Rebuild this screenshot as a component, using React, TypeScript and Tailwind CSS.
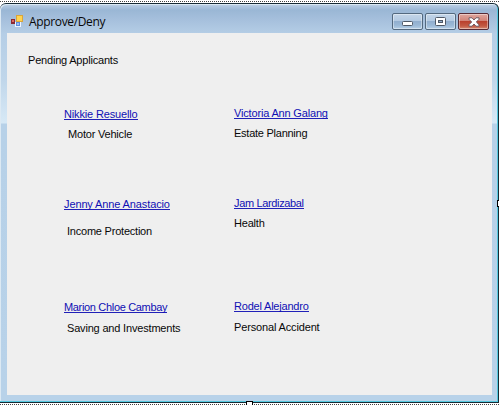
import type { ReactNode } from 'react';

const dots = 'h-px bg-[repeating-linear-gradient(90deg,#444_0px,#444_1px,#fff_1px,#fff_2px)]';

function Applicant({ name, plan, nameClass, planClass }: { name: string; plan: string; nameClass: string; planClass: string }) {
  return (
    <div className="flex flex-col items-start">
      <a href="#" className={`block h-[13px] border-b border-[#2020b8] leading-[14px] whitespace-nowrap text-[#1010b4] ${nameClass}`}>{name}</a>
      <span className={`block leading-[14px] whitespace-nowrap ${planClass}`}>{plan}</span>
    </div>
  );
}

function CaptionButton({ label, close = false, children }: { label: string; close?: boolean; children: ReactNode }) {
  const tone = close
    ? 'border-[#562b35] bg-[linear-gradient(#dfa79f_0%,#d18377_46%,#b9412e_50%,#c35a43_80%,#d58c75_100%)]'
    : 'border-[#53697f] bg-[linear-gradient(#c3d5e8_0%,#b3cae2_46%,#92afcf_50%,#9ab8d6_75%,#b7d0e7_100%)]';
  return (
    <button aria-label={label} className={`flex h-[17px] w-[31px] items-center justify-center rounded-[2px] border shadow-[inset_0_0_0_1px_rgba(255,255,255,0.4)] ${tone}`}>
      {children}
    </button>
  );
}

export default function App() {
  return (
    <div className="relative flex h-[405px] w-[499px] flex-col overflow-hidden bg-white pt-px font-['Liberation_Sans',Arial,sans-serif] text-[11px] text-[#080808]">
      <div className={dots} />
      <div className="mt-px flex h-[400px] w-[499px] flex-col rounded-t-[6px] border-t border-r border-b border-[#172b35] bg-[linear-gradient(#bed2e7_0px,#9ab7d5_6px,#a5bfdc_15px,#b5cee6_30px,#c0d6ea_75px,#d7e9f6_119px,#b7d1e8_120px,#b8d2e9_100%)] pr-[6px] pl-[7px] shadow-[inset_-1px_-1px_0_#55c9df,inset_1px_1px_0_#dce9f3]">
        <header className="flex h-[29px] shrink-0 items-start">
          <svg width="12" height="12" viewBox="0 0 12 12" className="mt-[11px] ml-[4px]" shapeRendering="crispEdges">
            <rect x="0" y="4" width="4" height="5" fill="#8b2932" />
            <rect x="1" y="5" width="2" height="2" fill="#dc6961" />
            <rect x="5" y="0" width="7" height="7" fill="#d9a53b" />
            <rect x="6" y="1" width="5" height="5" fill="#ffd452" />
            <rect x="4" y="7" width="6" height="5" fill="#eef4ff" />
            <rect x="5" y="7" width="4" height="4" fill="#5f8edb" />
            <rect x="6" y="8" width="2" height="2" fill="#9cbdf1" />
          </svg>
          <h1 className="mt-[10px] ml-[6px] font-['Open_Sans',sans-serif] text-[12px] leading-[16px] tracking-[-0.35px]">Approve/Deny</h1>
          <div className="mt-[9px] mr-[3px] ml-auto flex gap-[2px]">
            <CaptionButton label="Minimize">
              <svg width="11" height="5" className="mt-[4px]"><rect x=".5" y=".5" width="10" height="4" rx="1" fill="#fff" stroke="#4f5966" /></svg>
            </CaptionButton>
            <CaptionButton label="Maximize">
              <svg width="11" height="9"><rect x=".5" y=".5" width="10" height="8" rx="1" fill="#fff" stroke="#4f5966" /><rect x="3.5" y="3.5" width="4" height="2" fill="#91adca" stroke="#4f5966" /></svg>
            </CaptionButton>
            <CaptionButton label="Close" close>
              <svg width="12" height="10" viewBox="0 0 12 10"><path d="M1 .8h3L6 3 8 .8h3v1.5L8.3 5 11 7.7v1.5H8L6 7 4 9.2H1V7.7L3.7 5 1 2.3z" fill="#fff" stroke="#65505a" strokeWidth=".9" /></svg>
            </CaptionButton>
          </div>
        </header>
        <main className="h-[362px] shrink-0 bg-[#efefef] pt-[20px] pl-[21px]">
          <h2 className="leading-[14px] tracking-[-0.2px]">Pending Applicants</h2>
          <div className="ml-[36px] grid grid-cols-[170px_200px] grid-rows-[90px_103px_60px] pt-[40px]">
            <Applicant name="Nikkie Resuello" plan="Motor Vehicle" nameClass="tracking-[-0.15px]" planClass="mt-[7px] ml-[4px] tracking-[-0.2px]" />
            <div className="-mt-px"><Applicant name="Victoria Ann Galang" plan="Estate Planning" nameClass="tracking-[-0.17px]" planClass="mt-[7px] tracking-[-0.25px]" /></div>
            <Applicant name="Jenny Anne Anastacio" plan="Income Protection" nameClass="tracking-[-0.12px]" planClass="mt-[14px] ml-[3px] tracking-[-0.22px]" />
            <div className="-mt-px"><Applicant name="Jam Lardizabal" plan="Health" nameClass="tracking-[-0.35px]" planClass="mt-[7px] tracking-[-0.2px]" /></div>
            <Applicant name="Marion Chloe Cambay" plan="Saving and Investments" nameClass="tracking-[-0.33px]" planClass="mt-[8px] ml-[3px] tracking-[-0.18px]" />
            <div className="-mt-px"><Applicant name="Rodel Alejandro" plan="Personal Accident" nameClass="tracking-[-0.2px]" planClass="mt-[8px] tracking-[-0.15px]" /></div>
          </div>
        </main>
      </div>
      <div className={`mt-px ${dots}`} />
      <i className="absolute bottom-0 left-[246px] h-[4px] w-[7px] border-x border-t border-black bg-white" />
      <i className="absolute top-[200px] right-0 h-[7px] w-[2px] border-y border-l border-black bg-white" />
    </div>
  );
}
